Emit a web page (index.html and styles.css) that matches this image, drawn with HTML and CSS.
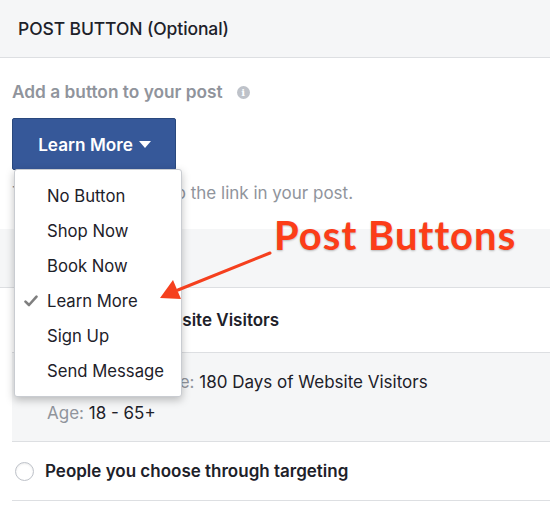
FILE: index.html
```html
<!DOCTYPE html>
<html lang="en">
<head>
    <meta charset="UTF-8">
    <meta name="viewport" content="width=device-width, initial-scale=1.0">
    <title>Post Button</title>
    <link rel="stylesheet" href="styles.css">
</head>
<body>
    <div class="panel-header">POST BUTTON (Optional)</div>

    <div class="post-button">
        <div class="field-label">
            Add a button to your post
            <span class="info-icon">i</span>
        </div>

        <div class="button-wrap">
            <button class="cta-button">Learn More <span class="caret"></span></button>

            <ul class="dropdown">
                <li>No Button</li>
                <li>Shop Now</li>
                <li>Book Now</li>
                <li class="selected">
                    <svg class="check" width="14" height="12" viewBox="0 0 14 12">
                        <path d="M1.5 6.6 L5 10 L12.5 1.6" fill="none" stroke="#7f7f7f" stroke-width="2.6" stroke-linecap="round" stroke-linejoin="round"/>
                    </svg>
                    Learn More
                </li>
                <li>Sign Up</li>
                <li>Send Message</li>
            </ul>
        </div>

        <p class="hint">This button will link to the link in your post.</p>
    </div>

    <div class="band"></div>

    <div class="audience">
        <div class="audience-row">
            <span class="radio checked"></span>
            <span class="row-title">180 Days of Website Visitors</span>
        </div>
        <div class="audience-details">
            <p><span class="muted">Custom Audience:</span> 180 Days of Website Visitors</p>
            <p><span class="muted">Age:</span> 18 - 65+</p>
        </div>
        <div class="audience-row">
            <span class="radio"></span>
            <span class="row-title">People you choose through targeting</span>
        </div>
    </div>

    <!-- annotation over the screenshot -->
    <div class="callout">Post Buttons</div>
    <svg class="callout-arrow" width="550" height="506" viewBox="0 0 550 506">
        <line x1="270" y1="253" x2="178" y2="290" stroke="#f5401e" stroke-width="3" stroke-linecap="round"/>
        <polygon points="160,298 173,280 181,299" fill="#f5401e"/>
    </svg>
</body>
</html>
```

FILE: styles.css
```css
body {
    margin: 0;
    padding: 0;
    width: 550px;
    height: 506px;
    overflow: hidden;
    position: relative;
    background-color: #fff;
    font-family: Inter, "Noto Sans", Arial, sans-serif;
    color: #1d2129;
}

p {
    margin: 0;
}

.panel-header {
    height: 57px;
    line-height: 57px;
    padding-left: 18px;
    background-color: #f5f6f7;
    border-bottom: 1px solid #dddfe2;
    font-size: 17.5px;
    font-weight: 500;
    letter-spacing: -0.1px;
}

.post-button {
    padding-left: 12px;
}

.field-label {
    margin-top: 24px;
    height: 20px;
    line-height: 20px;
    font-size: 17.3px;
    font-weight: 600;
    color: #90949c;
    display: flex;
    align-items: center;
}

.info-icon {
    margin-left: 14px;
    width: 13px;
    height: 13px;
    border-radius: 50%;
    background-color: #bec2c9;
    color: #fff;
    font-size: 10px;
    font-weight: 700;
    line-height: 13px;
    text-align: center;
    font-family: "DejaVu Serif", serif;
}

.button-wrap {
    position: relative;
    margin-top: 16px;
}

.cta-button {
    width: 164px;
    height: 52px;
    background-color: #365899;
    border: 1px solid #29487d;
    border-radius: 2px;
    color: #fff;
    font-family: inherit;
    font-size: 17.2px;
    font-weight: 600;
    display: flex;
    align-items: center;
    justify-content: center;
    gap: 6px;
    padding: 0 0 0 1px;
}

.caret {
    width: 0;
    height: 0;
    border-left: 6px solid transparent;
    border-right: 6px solid transparent;
    border-top: 7px solid #fff;
    margin-top: 1px;
}

.dropdown {
    position: absolute;
    top: 51px;
    left: 2px;
    width: 166px;
    margin: 0;
    padding: 9px 0 7px;
    list-style: none;
    background-color: #fff;
    border: 1px solid #c9ccd1;
    border-radius: 3px;
    box-shadow: 0 3px 8px rgba(0, 0, 0, 0.25);
    z-index: 2;
}

.dropdown li {
    position: relative;
    height: 35px;
    line-height: 35px;
    padding-left: 32px;
    font-size: 16.7px;
}

.dropdown .check {
    position: absolute;
    left: 9px;
    top: 11px;
}

.hint {
    margin-top: 13px;
    line-height: 20px;
    font-size: 17px;
    color: #90949c;
}

.band {
    margin-top: 26px;
    height: 58px;
    background-color: #f5f6f7;
    border-bottom: 1px solid #dddfe2;
}

.audience {
    margin-left: 12px;
}

.audience-row {
    height: 64px;
    display: flex;
    align-items: center;
    gap: 11px;
    padding-left: 3px;
    border-bottom: 1px solid #dddfe2;
}

.audience-row:last-child {
    height: 58px;
}

.row-title {
    font-size: 17px;
    font-weight: 600;
}

.radio {
    width: 17px;
    height: 17px;
    border: 1px solid #bec2c9;
    border-radius: 50%;
    background-color: #fff;
    box-shadow: inset 0 1px 2px rgba(0, 0, 0, 0.08);
}

.radio.checked {
    border: 5px solid #4267b2;
    width: 9px;
    height: 9px;
}

.audience-details {
    background-color: #f5f6f7;
    padding: 19px 0 18px 35px;
    border-bottom: 1px solid #dddfe2;
    font-size: 17px;
}

.audience-details p {
    line-height: 20px;
}

.audience-details p + p {
    margin-top: 11px;
}

.muted {
    color: #90949c;
}

.callout {
    position: absolute;
    left: 274px;
    top: 215px;
    font-family: Lato, "Noto Sans", sans-serif;
    font-size: 40px;
    line-height: 1;
    font-weight: 700;
    letter-spacing: 1px;
    color: #fc3d18;
    text-shadow: 0 1px 2px rgba(0, 0, 0, 0.25);
    z-index: 3;
}

.callout-arrow {
    position: absolute;
    left: 0;
    top: 0;
    z-index: 3;
}
```
